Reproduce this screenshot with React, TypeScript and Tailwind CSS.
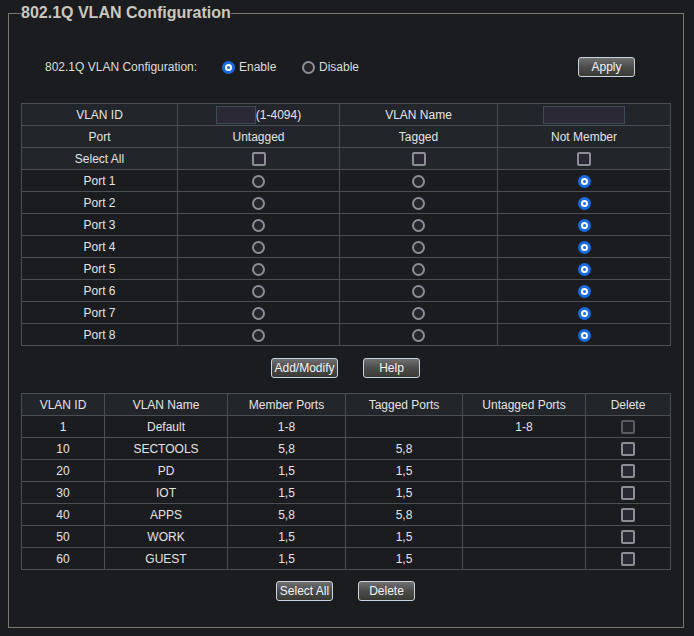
import React from "react";

const font = { fontFamily: '"Liberation Sans", Arial, sans-serif' };

function Radio({ checked }: { checked?: boolean }) {
  if (checked) {
    return (
      <span className="inline-flex w-[13px] h-[13px] rounded-full bg-[#1a6be0] items-center justify-center align-middle">
        <span className="w-[7px] h-[7px] rounded-full border-2 border-white bg-[#1a6be0]" />
      </span>
    );
  }
  return (
    <span className="inline-block w-[13px] h-[13px] rounded-full border-2 border-[#8e8d96] bg-[#26252c] align-middle" />
  );
}

function Check({ dim }: { dim?: boolean }) {
  return (
    <span
      className={
        "inline-block w-[14px] h-[14px] rounded-[2px] border-2 align-middle " +
        (dim ? "border-[#5c5b63] bg-[#232228]" : "border-[#8e8d96] bg-[#2a2832]")
      }
    />
  );
}

function Btn({ children, w }: { children: React.ReactNode; w: string }) {
  return (
    <button
      className={
        "h-[20px] rounded-[3px] border border-[#c6d3e0] bg-gradient-to-b from-[#707070] via-[#4c4c4c] to-[#3a3a34] text-[12px] text-[#f4f4f4] leading-none " +
        w
      }
    >
      {children}
    </button>
  );
}

const td = "border border-[#4b4e52] text-center h-[22px] p-0 text-[12px] text-[#e4e4e4]";

export default function App() {
  const ports = [1, 2, 3, 4, 5, 6, 7, 8];
  const vlans = [
    ["1", "Default", "1-8", "", "1-8"],
    ["10", "SECTOOLS", "5,8", "5,8", ""],
    ["20", "PD", "1,5", "1,5", ""],
    ["30", "IOT", "1,5", "1,5", ""],
    ["40", "APPS", "5,8", "5,8", ""],
    ["50", "WORK", "1,5", "1,5", ""],
    ["60", "GUEST", "1,5", "1,5", ""],
  ];
  return (
    <div className="min-h-screen bg-[#1b1c1f] pl-[8px] pt-[3px]" style={font}>
      <fieldset className="w-[676px] h-[625px] border border-[#7b766e] px-[12px] m-0">
        <legend className="ml-[0px] px-0 text-[16px] font-bold text-[#cbc7be] leading-[20px]">
          802.1Q VLAN Configuration
        </legend>
        <div className="mt-[34px] h-[20px] flex items-center text-[12px] text-[#dcdcdc]">
          <span className="ml-[24px] w-[177px]">802.1Q VLAN Configuration:</span>
          <span className="w-[80px] flex items-center gap-[4px]">
            <Radio checked />
            <span>Enable</span>
          </span>
          <span className="flex items-center gap-[4px]">
            <Radio />
            <span>Disable</span>
          </span>
          <span className="ml-auto mr-[36px] flex">
            <Btn w="w-[57px]">Apply</Btn>
          </span>
        </div>

        <table className="mt-[26px] w-[649px] border-collapse table-fixed">
          <colgroup>
            <col className="w-[156px]" />
            <col className="w-[162px]" />
            <col className="w-[158px]" />
            <col className="w-[173px]" />
          </colgroup>
          <tbody>
            <tr className="bg-[#22252a]">
              <td className={td}>VLAN ID</td>
              <td className={td}>
                <span className="inline-flex items-center align-middle">
                  <span className="inline-block w-[40px] h-[18px] bg-[#2a2935] border border-[#3d4a5a]" />
                  <span>(1-4094)</span>
                </span>
              </td>
              <td className={td}>VLAN Name</td>
              <td className={td}>
                <span className="inline-block w-[82px] h-[18px] bg-[#2a2935] border border-[#3d4a5a] align-middle" />
              </td>
            </tr>
            <tr className="bg-[#22252a]">
              <td className={td}>Port</td>
              <td className={td}>Untagged</td>
              <td className={td}>Tagged</td>
              <td className={td}>Not Member</td>
            </tr>
            <tr className="bg-[#22252a]">
              <td className={td}>Select All</td>
              <td className={td}><Check /></td>
              <td className={td}><Check /></td>
              <td className={td}><Check /></td>
            </tr>
            {ports.map((p) => (
              <tr key={p}>
                <td className={td}>Port {p}</td>
                <td className={td}><Radio /></td>
                <td className={td}><Radio /></td>
                <td className={td}><Radio checked /></td>
              </tr>
            ))}
          </tbody>
        </table>

        <div className="mt-[12px] flex justify-center gap-[25px] w-[649px]">
          <Btn w="w-[67px]">Add/Modify</Btn>
          <Btn w="w-[57px]">Help</Btn>
        </div>

        <table className="mt-[15px] w-[649px] border-collapse table-fixed">
          <colgroup>
            <col className="w-[83px]" />
            <col className="w-[123px]" />
            <col className="w-[118px]" />
            <col className="w-[117px]" />
            <col className="w-[123px]" />
            <col className="w-[85px]" />
          </colgroup>
          <tbody>
            <tr className="bg-[#22252a]">
              <td className={td}>VLAN ID</td>
              <td className={td}>VLAN Name</td>
              <td className={td}>Member Ports</td>
              <td className={td}>Tagged Ports</td>
              <td className={td}>Untagged Ports</td>
              <td className={td}>Delete</td>
            </tr>
            {vlans.map((v, i) => (
              <tr key={v[0]}>
                <td className={td}>{v[0]}</td>
                <td className={td}>{v[1]}</td>
                <td className={td}>{v[2]}</td>
                <td className={td}>{v[3]}</td>
                <td className={td}>{v[4]}</td>
                <td className={td}><Check dim={i === 0} /></td>
              </tr>
            ))}
          </tbody>
        </table>

        <div className="mt-[11px] flex justify-center gap-[25px] w-[649px]">
          <Btn w="w-[57px]">Select All</Btn>
          <Btn w="w-[57px]">Delete</Btn>
        </div>
      </fieldset>
    </div>
  );
}
